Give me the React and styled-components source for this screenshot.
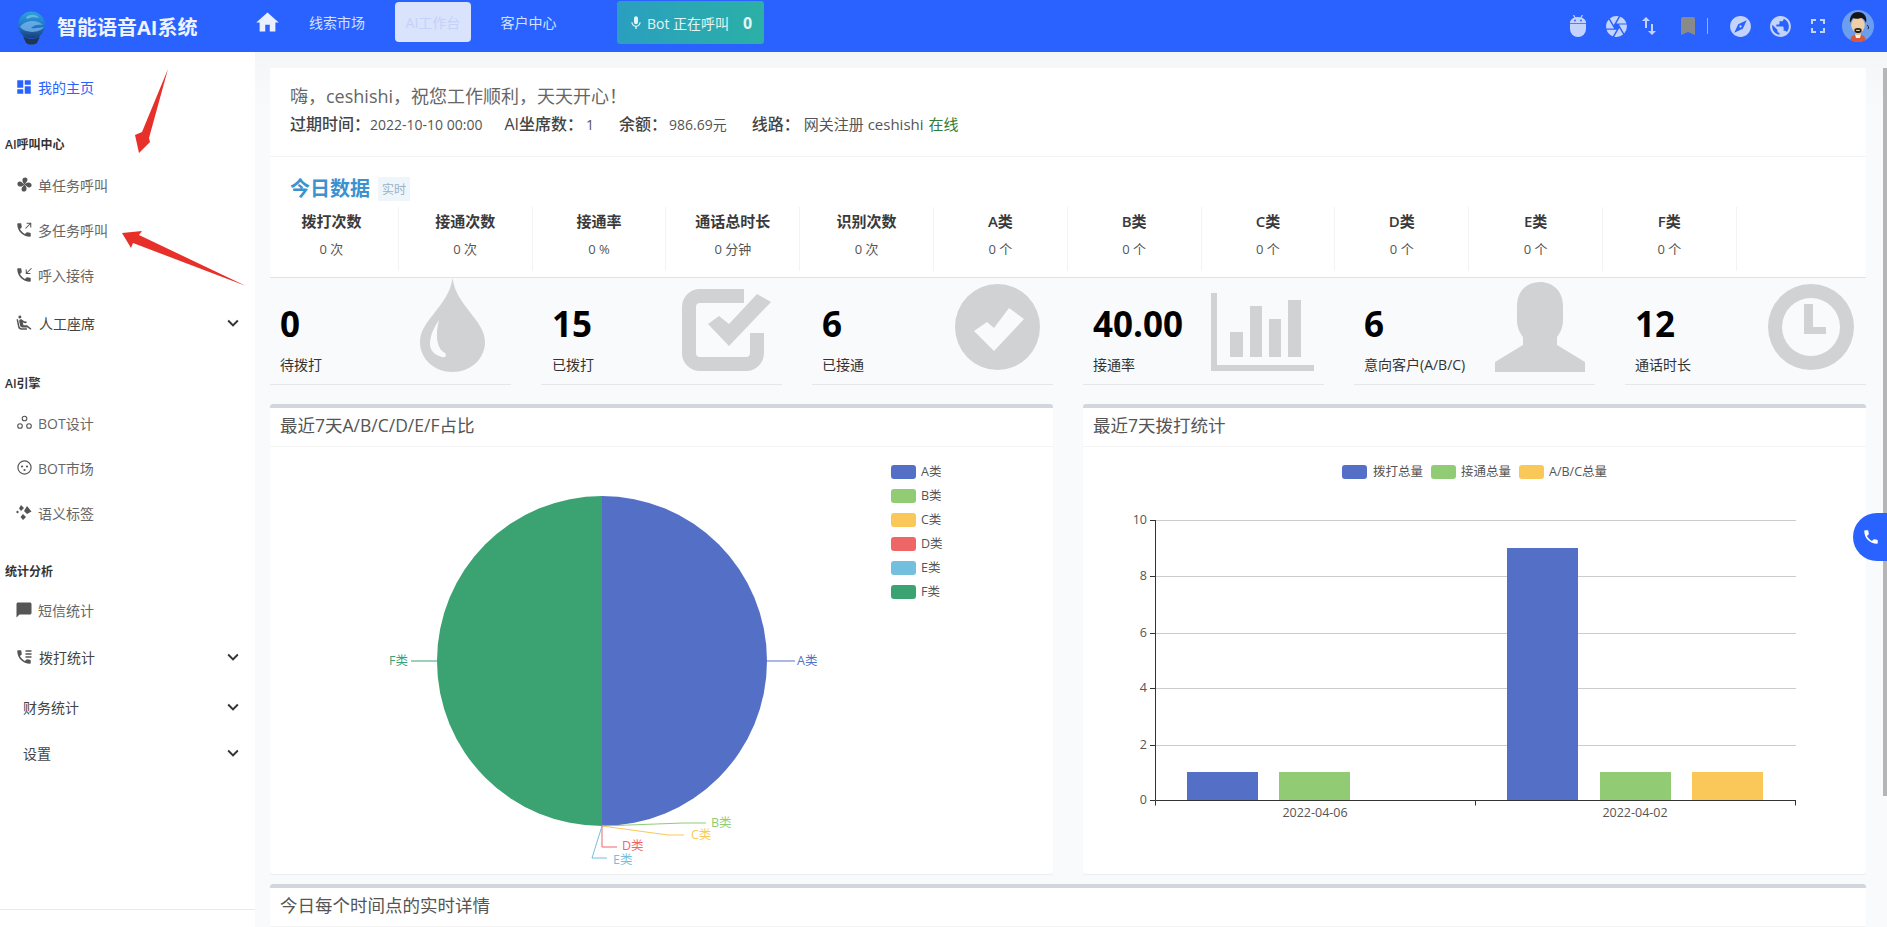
import React from 'react';
import styled, { createGlobalStyle } from 'styled-components';
import {
  MdHome, MdMic, MdCamera, MdSwapVert, MdBookmark, MdExplore, MdPublic, MdFullscreen,
  MdDashboard, MdExpandMore, MdAirlineSeatReclineExtra, MdChatBubble, MdPhone,
} from 'react-icons/md';

const FONT = `"Open Sans", "Noto Sans CJK SC", "Noto Sans", sans-serif`;

const Global = createGlobalStyle`
  html, body { margin: 0; height: 100%; overflow: hidden; background: #f8fafc; }
  body { font-family: ${FONT}; color: #333; }
  #root { height: 100%; }
`;

const Shell = styled.div`
  position: relative;
  display: flex;
  flex-direction: column;
  height: 927px;
  overflow: hidden;
`;

/* ---------- top bar ---------- */
const TopBar = styled.header`
  display: flex;
  align-items: center;
  flex: 0 0 52px;
  height: 52px;
  background: #2962ff;
  color: #fff;
`;
const Brand = styled.div`
  display: flex;
  align-items: center;
  width: 257px;
  padding-left: 18px;
  box-sizing: border-box;
  flex: none;
`;
const BrandName = styled.span`
  margin-left: 12px;
  font-size: 20px;
  font-weight: 700;
  letter-spacing: 0;
  white-space: nowrap;
  color: #eef3ff;
`;
const HomeLink = styled.span`
  display: flex;
  width: 20px;
  justify-content: center;
  color: #eaf0ff;
  font-size: 27px;
  margin-top: -8px;
  svg { flex: none; }
`;
const NavLink = styled.span`
  display: flex;
  align-items: center;
  justify-content: center;
  width: ${p => p.$w}px;
  margin-left: ${p => p.$ml}px;
  height: 40px;
  margin-top: -8px;
  font-size: 14px;
  border-radius: 4px;
  color: ${p => (p.$active ? '#c3d2fb' : '#d6e1ff')};
  background: ${p => (p.$active ? '#d9e3fb' : 'transparent')};
  white-space: nowrap;
`;
const BotButton = styled.div`
  display: flex;
  align-items: center;
  box-sizing: border-box;
  width: 147px;
  height: 43px;
  margin: -7px 0 0 60px;
  padding-left: 11px;
  border-radius: 3px;
  background: linear-gradient(90deg, #2a9fc0, #2bb0a6);
  color: #e4f5f5;
  font-size: 14px;
  white-space: nowrap;
`;
const BotCount = styled.b`
  margin-left: 14px;
  font-size: 16px;
  font-weight: 700;
`;
const TopRight = styled.div`
  display: flex;
  align-items: center;
  margin-left: auto;
  height: 100%;
  color: #c3d3fb;
  padding-right: 13px;
`;
const TopIcon = styled.span`
  display: flex;
  margin-left: ${p => p.$ml}px;
  font-size: ${p => p.$size}px;
  color: ${p => p.$color || 'inherit'};
`;
const TopDivider = styled.span`
  width: 1px;
  height: 16px;
  margin-left: 7px;
  background: #8fb0ff;
`;

/* ---------- frame ---------- */
const Body = styled.div`
  display: flex;
  flex: 1;
  min-height: 0;
`;

/* ---------- side bar ---------- */
const Side = styled.aside`
  display: flex;
  flex-direction: column;
  flex: 0 0 255px;
  background: #fff;
`;
const SideHead = styled.div`
  margin: ${p => p.$mt}px 0 ${p => p.$mb}px 5px;
  height: 20px;
  line-height: 20px;
  font-size: 12px;
  font-weight: 600;
  color: #333;
`;
const SideItem = styled.div`
  display: flex;
  align-items: center;
  flex: none;
  height: 45px;
  margin-top: ${p => p.$mt || 0}px;
  padding-left: ${p => (p.$plain ? 23 : 16)}px;
  font-size: 14px;
  color: ${p => (p.$active ? '#2962ff' : p.$dark ? '#444' : '#666')};
`;
const SideGlyph = styled.span`
  display: flex;
  align-items: center;
  justify-content: center;
  width: 16px;
  height: 18px;
  margin-right: ${p => p.$gap || 6}px;
  color: ${p => (p.$active ? '#2962ff' : '#555')};
  font-size: 18px;
  svg { flex: none; }
`;
const Caret = styled.span`
  display: flex;
  margin-left: auto;
  margin-right: 11px;
  font-size: 22px;
  color: #333;
`;
const SideFoot = styled.div`
  margin-top: auto;
  height: 17px;
  border-top: 1px solid #e8eaee;
`;

/* ---------- main ---------- */
const Main = styled.main`
  position: relative;
  flex: 1;
  min-width: 0;
  overflow: hidden;
  padding: 16px 21px 0 15px;
  background: linear-gradient(180deg, #f3f5f7 0, #f5f7f9 16px, #f8fafc 60px);
`;
const ScrollThumb = styled.div`
  position: absolute;
  top: 16px;
  right: 0;
  width: 4px;
  height: 728px;
  background: #b6b6b6;
`;
const Greeting = styled.section`
  box-sizing: border-box;
  height: 89px;
  padding: 14px 0 0 20px;
  background: #fff;
  border-bottom: 1px solid #f1f3f5;
`;
const Hello = styled.div`
  font-size: 18px;
  line-height: 28px;
  color: #666;
`;
const Meta = styled.div`
  display: flex;
  align-items: center;
  line-height: 29px;
  white-space: nowrap;
`;
const MetaKey = styled.span`
  font-size: 16px;
  font-weight: 500;
  color: #444;
  margin-left: ${p => p.$ml || 0}px;
`;
const MetaValue = styled.span`
  font-size: ${p => p.$size || 14}px;
  color: #555;
  margin-left: ${p => p.$ml || 0}px;
`;
const Online = styled.span`
  font-size: 15px;
  color: #2e7d32;
  margin-left: 5px;
`;

const DataPanel = styled.section`
  box-sizing: border-box;
  height: 121px;
  background: #fff;
  border-bottom: 1px solid #dfe2e6;
`;
const DataTitleRow = styled.div`
  display: flex;
  align-items: center;
  height: 50px;
  padding: 10px 0 0 20px;
  box-sizing: border-box;
`;
const DataTitle = styled.h2`
  margin: 0;
  font-size: 20px;
  font-weight: 700;
  color: #3c92cf;
`;
const LiveTag = styled.span`
  display: flex;
  align-items: center;
  justify-content: center;
  width: 32px;
  height: 24px;
  margin: 4px 0 0 8px;
  background: #eef5fb;
  color: #9bb2c4;
  font-size: 12px;
`;
const DataGrid = styled.div`
  display: grid;
  grid-template-columns: repeat(11, 133.8px);
  margin-left: -5px;
`;
const DataCell = styled.div`
  box-sizing: border-box;
  height: 64px;
  padding-top: 1px;
  text-align: center;
  border-right: 1px solid #f1f3f5;
`;
const DataHead = styled.div`
  font-size: 15px;
  font-weight: 600;
  line-height: 26px;
  color: #3a3a3a;
`;
const DataValue = styled.div`
  margin-top: 3px;
  font-size: 13px;
  line-height: 24px;
  color: #555;
`;

const StatGrid = styled.section`
  display: grid;
  grid-template-columns: repeat(6, 1fr);
  column-gap: 30px;
  margin-bottom: 19px;
`;
const Stat = styled.div`
  position: relative;
  box-sizing: border-box;
  height: 107px;
  padding: 24px 0 0 ${p => p.$pl}px;
  border-bottom: 1px solid #e4e7ec;
`;
const StatNumber = styled.div`
  position: relative;
  font-size: 35px;
  font-weight: 700;
  line-height: 44px;
  color: #000;
`;
const StatLabel = styled.div`
  position: relative;
  margin-top: 9px;
  font-size: 14px;
  line-height: 20px;
  color: #333;
`;
const StatArt = styled.svg`
  position: absolute;
  top: ${p => p.$top}px;
  right: ${p => p.$right}px;
  fill: #d1d2d4;
`;

const ChartRow = styled.section`
  display: grid;
  grid-template-columns: 1fr 1fr;
  column-gap: 30px;
`;
const Card = styled.article`
  box-sizing: border-box;
  height: ${p => p.$h}px;
  margin-top: ${p => p.$mt || 0}px;
  background: #fff;
  border-top: 4px solid #d2d6de;
  border-radius: 3px;
  box-shadow: 0 1px 1px rgba(0, 0, 0, 0.06);
`;
const CardHead = styled.h3`
  box-sizing: border-box;
  height: 39px;
  margin: 0;
  padding-left: 10px;
  line-height: 34px;
  font-size: 17.5px;
  font-weight: 400;
  color: #555;
  border-bottom: 1px solid #f4f4f4;
`;
const ChartSvg = styled.svg`
  display: block;
  font-family: ${FONT};
  font-size: 12.5px;
`;

const CallTab = styled.div`
  position: absolute;
  top: 461px;
  right: 0;
  display: flex;
  align-items: center;
  justify-content: center;
  width: 34px;
  height: 48px;
  padding-left: 2px;
  box-sizing: border-box;
  border-radius: 24px 0 0 24px;
  background: #2962ff;
  color: #fff;
  font-size: 18px;
`;
const Annotations = styled.svg`
  position: absolute;
  top: 0;
  left: 0;
  pointer-events: none;
`;

/* ---------- drawings ---------- */
const PHONE = 'M6.62 10.79c1.44 2.83 3.76 5.14 6.59 6.59l2.2-2.2c.27-.27.67-.36 1.02-.24 1.12.37 2.33.57 3.57.57.55 0 1 .45 1 1V20c0 .55-.45 1-1 1-9.39 0-17-7.61-17-17 0-.55.45-1 1-1h3.5c.55 0 1 .45 1 1 0 1.25.2 2.45.57 3.57.11.35.03.74-.25 1.02l-2.2 2.2z';
const BLADE = 'M8 8C6 6 4.800 3.200 6.800 1.100 8.500-.2 11.200.4 11.200 3 11.200 5 9 6.500 8 8z';

const Logo = () => (
  <svg width="27" height="37" viewBox="0 0 27 37" style={{ marginTop: 2 }}>
    <defs>
      <linearGradient id="lg" x1="0" y1="0" x2="0" y2="1">
        <stop offset="0" stopColor="#2fa2d6" />
        <stop offset="0.55" stopColor="#1f74cc" />
        <stop offset="1" stopColor="#173f6e" />
      </linearGradient>
    </defs>
    <circle cx="13.500" cy="16" r="13.500" fill="url(#lg)" />
    <path d="M8 8c5-4 12-2 13 1-4-1-8-1-12 1z" fill="#67b5e3" />
    <path d="M2 18c5-7 17-8 23-2-5-1-9 0-12 3 3 .5 8 0 13-1-4 6-18 7-24 0z" fill="#7fbcec" opacity=".7" />
    <path d="M5 27c5 4 12 4 17 0l-3 7c-3 2-8 2-11 0z" fill="#1f3550" />
  </svg>
);
const Android = () => (
  <svg width="16" height="22" viewBox="0 0 16 22" fill="currentColor">
    <path d="M3.500 0l2 3.500M12.500 0l-2 3.500" stroke="currentColor" strokeWidth="1.200" />
    <path d="M8 2c4 0 7 1.800 8 4.500V8H0V6.500C1 3.800 4 2 8 2z" />
    <path d="M0 8.800h16V14a8 8 0 0 1-16 0z" />
    <circle cx="5" cy="5.500" r=".9" fill="#2962ff" />
    <circle cx="11" cy="5.500" r=".9" fill="#2962ff" />
  </svg>
);
const Avatar = () => (
  <svg width="32" height="32" viewBox="0 0 32 32" style={{ marginLeft: 12 }}>
    <defs>
      <clipPath id="av"><circle cx="16" cy="16" r="16" /></clipPath>
    </defs>
    <g clipPath="url(#av)">
      <rect width="32" height="32" fill="#6c9ef0" />
      <path d="M8 32c0-6 4-8 8-8s8 2 8 8z" fill="#d9573a" />
      <path d="M13 24h6l-1 4h-4z" fill="#f2f2f2" />
      <rect x="13.500" y="19" width="5" height="6" fill="#e2b98c" />
      <ellipse cx="16" cy="15" rx="6.800" ry="7.800" fill="#efcfa6" />
      <path d="M8 13C7 5 12 2 16 2s10 3 8 11c-1-3-3-5-5-5-2 1-6 1-8 0-1 1-2 3-3 5z" fill="#161616" />
      <path d="M12.500 19c2-1.500 5-1.500 7 0v2.500c-1 1-2 1.500-3.500 1.500s-2.500-.5-3.500-1.500z" fill="#1d1d1d" />
      <rect x="14.200" y="19.800" width="3.600" height="1.200" fill="#efcfa6" />
      <path d="M25 15c1.500 1 2 2.500 1 4" stroke="#223" strokeWidth="1" fill="none" />
    </g>
  </svg>
);
const Fan = () => (
  <svg width="15" height="15" viewBox="0 0 16 16" fill="currentColor">
    <path d={BLADE} />
    <path d={BLADE} transform="rotate(90 8 8)" />
    <path d={BLADE} transform="rotate(180 8 8)" />
    <path d={BLADE} transform="rotate(270 8 8)" />
  </svg>
);
const PhoneOut = () => (
  <svg width="18" height="18" viewBox="0 0 24 24" fill="currentColor">
    <path d={PHONE} />
    <path d="M14 10l7-7M15.500 3H21v5.500" fill="none" stroke="currentColor" strokeWidth="1.400" />
  </svg>
);
const PhoneIn = () => (
  <svg width="18" height="18" viewBox="0 0 24 24" fill="currentColor">
    <path d={PHONE} />
    <path d="M22 3l-7 7M15 4.500V10h5.500" fill="none" stroke="currentColor" strokeWidth="1.400" />
  </svg>
);
const PhoneList = () => (
  <svg width="18" height="18" viewBox="0 0 24 24" fill="currentColor">
    <path d={PHONE} />
    <path d="M14 4h8M14 8h8M14 12h8" fill="none" stroke="currentColor" strokeWidth="1.800" />
  </svg>
);
const Nodes = () => (
  <svg width="15" height="15" viewBox="0 0 15 15" fill="none" stroke="currentColor" strokeWidth="1.100">
    <circle cx="7.500" cy="3.500" r="2.300" />
    <circle cx="3" cy="11" r="2.300" />
    <circle cx="12" cy="11" r="2.300" />
  </svg>
);
const Market = () => (
  <svg width="15" height="15" viewBox="0 0 15 15">
    <circle cx="7.500" cy="7.500" r="6.600" fill="none" stroke="currentColor" strokeWidth="1.200" />
    <circle cx="5" cy="6.500" r="1.100" fill="currentColor" />
    <circle cx="10" cy="6.500" r="1.100" fill="currentColor" />
    <circle cx="7.500" cy="10" r="1.100" fill="currentColor" />
  </svg>
);
const Diamonds = () => (
  <svg width="16" height="15" viewBox="0 0 16 15" fill="currentColor">
    <path d="M5 0l3 3-3 3-2-2.500zM11 1l4.500 5.500L11 9 8 6zM0 7l1.500-1.500L3 7 1.500 8.500zM7 9l3 3-3 3-2.500-3z" />
  </svg>
);
const Drop = () => (
  <StatArt $top={0} $right={26} width="65" height="94" viewBox="0 0 65 94">
    <path d="M32.500 0C36 28 65 42 65 64c0 17-14.500 30-32.500 30S0 81 0 64C0 42 29 28 32.500 0z" />
    <path d="M19 42C12 52 10 60 10 66c0 6 4 11 12 13 4 1 5-2 3-4-6-3-11-13-6-33z" fill="#f8fafc" />
  </StatArt>
);
const CheckSquare = () => (
  <StatArt $top={11} $right={11} width="89" height="82" viewBox="0 0 89 82">
    <path d="M62 7H18A11 11 0 0 0 7 18v46a11 11 0 0 0 11 11h46a11 11 0 0 0 11-11V44" fill="none" stroke="#d1d2d4" strokeWidth="14" />
    <path d="M26 35l11-8 10 8L75 5l14 8-42 44z" />
  </StatArt>
);
const CheckCircle = () => (
  <StatArt $top={6} $right={13} width="85" height="86" viewBox="0 0 85 86">
    <path fillRule="evenodd" d="M42.500 0a42.500 43 0 1 1 0 86a42.500 43 0 1 1 0-86zM19 47l13-9 7 6 15-20 15 11-30 32z" />
  </StatArt>
);
const Bars = () => (
  <StatArt $top={15} $right={10} width="103" height="78" viewBox="0 0 103 78">
    <path d="M0 0h6v72h97v6H0z" />
    <rect x="19" y="39" width="13" height="25" />
    <rect x="39" y="13" width="12" height="51" />
    <rect x="58" y="26" width="12" height="38" />
    <rect x="77" y="7" width="13" height="57" />
  </StatArt>
);
const Person = () => (
  <StatArt $top={4} $right={10} width="90" height="90" viewBox="0 0 90 90">
    <path d="M45 0c13 0 23 9 23 24v14c0 8-3 13-6 17v8l28 17v10H0V80l28-17v-8c-3-4-6-9-6-17V24C22 9 32 0 45 0z" />
  </StatArt>
);
const Clock = () => (
  <StatArt $top={6} $right={12} width="86" height="86" viewBox="0 0 86 86">
    <path fillRule="evenodd" d="M43 0a43 43 0 1 1 0 86a43 43 0 1 1 0-86zM43 14a29 29 0 1 0 0 58a29 29 0 1 0 0-58z" />
    <path d="M36 20h9v23h13v7H36z" />
  </StatArt>
);

const PIE_LEGEND = [
  ['A类', '#5470c6'], ['B类', '#91cc75'], ['C类', '#fac858'],
  ['D类', '#ee6666'], ['E类', '#73c0de'], ['F类', '#3ba272'],
];
const PieChart = () => (
  <ChartSvg width="783" height="427" viewBox="0 0 783 427">
    {PIE_LEGEND.map(([name, color], i) => (
      <g key={name}>
        <rect x="621" y={18 + i * 24} width="25" height="14" rx="3" fill={color} />
        <text x="651" y={29 + i * 24} fill="#555">{name}</text>
      </g>
    ))}
    <path d="M332 214V49A165 165 0 0 1 332 379z" fill="#5470c6" />
    <path d="M332 214V49A165 165 0 0 0 332 379z" fill="#3ba272" />
    <g fill="none" strokeWidth="1">
      <path d="M497 214h28" stroke="#5470c6" />
      <path d="M167 214h-26" stroke="#3ba272" />
      <path d="M332 379l81-3h23" stroke="#91cc75" />
      <path d="M332 379l66 9h16" stroke="#fac858" />
      <path d="M332 379v21h15" stroke="#ee6666" />
      <path d="M332 379l-10 32h15" stroke="#73c0de" />
    </g>
    <text x="527" y="218" fill="#5470c6">A类</text>
    <text x="119" y="218" fill="#3ba272">F类</text>
    <text x="441" y="380" fill="#91cc75">B类</text>
    <text x="421" y="392" fill="#fac858">C类</text>
    <text x="352" y="403" fill="#ee6666">D类</text>
    <text x="343" y="417" fill="#73c0de">E类</text>
  </ChartSvg>
);

const BAR_LEGEND = [
  [259, 290, '拨打总量', '#5470c6'],
  [348, 378, '接通总量', '#91cc75'],
  [436, 466, 'A/B/C总量', '#fac858'],
];
const TICKS = [[10, 73], [8, 129], [6, 186], [4, 241], [2, 298], [0, 353]];
const BARS = [
  [104, 1, '#5470c6'], [196, 1, '#91cc75'],
  [424, 9, '#5470c6'], [517, 1, '#91cc75'], [609, 1, '#fac858'],
];
const BarChart = () => (
  <ChartSvg width="783" height="427" viewBox="0 0 783 427">
    {BAR_LEGEND.map(([x, tx, name, color]) => (
      <g key={name}>
        <rect x={x} y="18" width="25" height="14" rx="3" fill={color} />
        <text x={tx} y="29" fill="#555">{name}</text>
      </g>
    ))}
    {TICKS.map(([v, y]) => (
      <g key={v}>
        {v !== 0 && <line x1="72" x2="713" y1={y + 0.5} y2={y + 0.5} stroke="#ccc" />}
        <line x1="67" x2="72" y1={y + 0.5} y2={y + 0.5} stroke="#333" />
        <text x="64" y={y + 4} textAnchor="end" fill="#555">{v}</text>
      </g>
    ))}
    {BARS.map(([x, v, color], i) => (
      <rect key={i} x={x} y={353 - v * 28} width="71" height={v * 28} fill={color} />
    ))}
    <path d="M72.500 73V353.500H713M72.500 353.500v5M392.500 353.500v5M712.500 353.500v5" stroke="#333" fill="none" />
    <text x="232" y="370" textAnchor="middle" fill="#555">2022-04-06</text>
    <text x="552" y="370" textAnchor="middle" fill="#555">2022-04-02</text>
  </ChartSvg>
);

const DATA = [
  ['拨打次数', '0 次'], ['接通次数', '0 次'], ['接通率', '0 %'], ['通话总时长', '0 分钟'], ['识别次数', '0 次'],
  ['A类', '0 个'], ['B类', '0 个'], ['C类', '0 个'], ['D类', '0 个'], ['E类', '0 个'], ['F类', '0 个'],
];
const STATS = [
  ['0', '待拨打', Drop, 10],
  ['15', '已拨打', CheckSquare, 11],
  ['6', '已接通', CheckCircle, 10],
  ['40.00', '接通率', Bars, 10],
  ['6', '意向客户(A/B/C)', Person, 10],
  ['12', '通话时长', Clock, 10],
];

export default function App() {
  return (
    <Shell>
      <Global />
      <TopBar>
        <Brand>
          <Logo />
          <BrandName>智能语音AI系统</BrandName>
        </Brand>
        <HomeLink><MdHome /></HomeLink>
        <NavLink $w={56} $ml={32}>线索市场</NavLink>
        <NavLink $w={76} $ml={30} $active>AI工作台</NavLink>
        <NavLink $w={57} $ml={29}>客户中心</NavLink>
        <BotButton>
          <MdMic size={16} style={{ marginRight: 3 }} />
          Bot 正在呼叫
          <BotCount>0</BotCount>
        </BotButton>
        <TopRight>
          <TopIcon $ml={0}><Android /></TopIcon>
          <TopIcon $ml={18} $size={25}><MdCamera /></TopIcon>
          <TopIcon $ml={8} $size={24}><MdSwapVert /></TopIcon>
          <TopIcon $ml={15} $size={24} $color="#8a8a8a"><MdBookmark /></TopIcon>
          <TopDivider />
          <TopIcon $ml={20} $size={25}><MdExplore /></TopIcon>
          <TopIcon $ml={15} $size={25}><MdPublic /></TopIcon>
          <TopIcon $ml={13} $size={24}><MdFullscreen /></TopIcon>
          <Avatar />
        </TopRight>
      </TopBar>

      <Body>
        <Side>
          <SideItem $active $mt={12}>
            <SideGlyph $active><MdDashboard /></SideGlyph>我的主页
          </SideItem>
          <SideHead $mt={26} $mb={7}>AI呼叫中心</SideHead>
          <SideItem><SideGlyph><Fan /></SideGlyph>单任务呼叫</SideItem>
          <SideItem><SideGlyph><PhoneOut /></SideGlyph>多任务呼叫</SideItem>
          <SideItem><SideGlyph><PhoneIn /></SideGlyph>呼入接待</SideItem>
          <SideItem $dark $mt={3}>
            <SideGlyph $gap={7}><MdAirlineSeatReclineExtra /></SideGlyph>人工座席
            <Caret><MdExpandMore /></Caret>
          </SideItem>
          <SideHead $mt={29} $mb={6}>AI引擎</SideHead>
          <SideItem><SideGlyph><Nodes /></SideGlyph>BOT设计</SideItem>
          <SideItem><SideGlyph><Market /></SideGlyph>BOT市场</SideItem>
          <SideItem><SideGlyph><Diamonds /></SideGlyph>语义标签</SideItem>
          <SideHead $mt={27} $mb={5}>统计分析</SideHead>
          <SideItem><SideGlyph><MdChatBubble /></SideGlyph>短信统计</SideItem>
          <SideItem $dark $mt={2}>
            <SideGlyph $gap={7}><PhoneList /></SideGlyph>拨打统计
            <Caret><MdExpandMore /></Caret>
          </SideItem>
          <SideItem $dark $plain $mt={5}>财务统计<Caret><MdExpandMore /></Caret></SideItem>
          <SideItem $dark $plain $mt={1}>设置<Caret><MdExpandMore /></Caret></SideItem>
          <SideFoot />
        </Side>

        <Main>
          <Greeting>
            <Hello>嗨，ceshishi，祝您工作顺利，天天开心！</Hello>
            <Meta>
              <MetaKey>过期时间：</MetaKey>
              <MetaValue>2022-10-10 00:00</MetaValue>
              <MetaKey $ml={22}>AI坐席数：</MetaKey>
              <MetaValue $ml={3}>1</MetaValue>
              <MetaKey $ml={25}>余额：</MetaKey>
              <MetaValue $ml={2}>986.69元</MetaValue>
              <MetaKey $ml={25}>线路：</MetaKey>
              <MetaValue $ml={4} $size={15}>网关注册 ceshishi</MetaValue>
              <Online>在线</Online>
            </Meta>
          </Greeting>

          <DataPanel>
            <DataTitleRow>
              <DataTitle>今日数据</DataTitle>
              <LiveTag>实时</LiveTag>
            </DataTitleRow>
            <DataGrid>
              {DATA.map(([h, v]) => (
                <DataCell key={h}>
                  <DataHead>{h}</DataHead>
                  <DataValue>{v}</DataValue>
                </DataCell>
              ))}
            </DataGrid>
          </DataPanel>

          <StatGrid>
            {STATS.map(([n, l, Art, pl]) => (
              <Stat key={l} $pl={pl}>
                <Art />
                <StatNumber>{n}</StatNumber>
                <StatLabel>{l}</StatLabel>
              </Stat>
            ))}
          </StatGrid>

          <ChartRow>
            <Card $h={470}>
              <CardHead>最近7天A/B/C/D/E/F占比</CardHead>
              <PieChart />
            </Card>
            <Card $h={470}>
              <CardHead>最近7天拨打统计</CardHead>
              <BarChart />
            </Card>
          </ChartRow>

          <Card $h={200} $mt={10}>
            <CardHead>今日每个时间点的实时详情</CardHead>
          </Card>

          <ScrollThumb />
          <CallTab><MdPhone /></CallTab>
        </Main>
      </Body>

      <Annotations width="260" height="300" viewBox="0 0 260 300">
        <polygon points="168,69 142,132 135,135 139,153 150,142 149,138" fill="#e8302a" />
        <polygon points="246,286 139,235 142,231 122,233 131,248 133,243" fill="#e8302a" />
      </Annotations>
    </Shell>
  );
}
